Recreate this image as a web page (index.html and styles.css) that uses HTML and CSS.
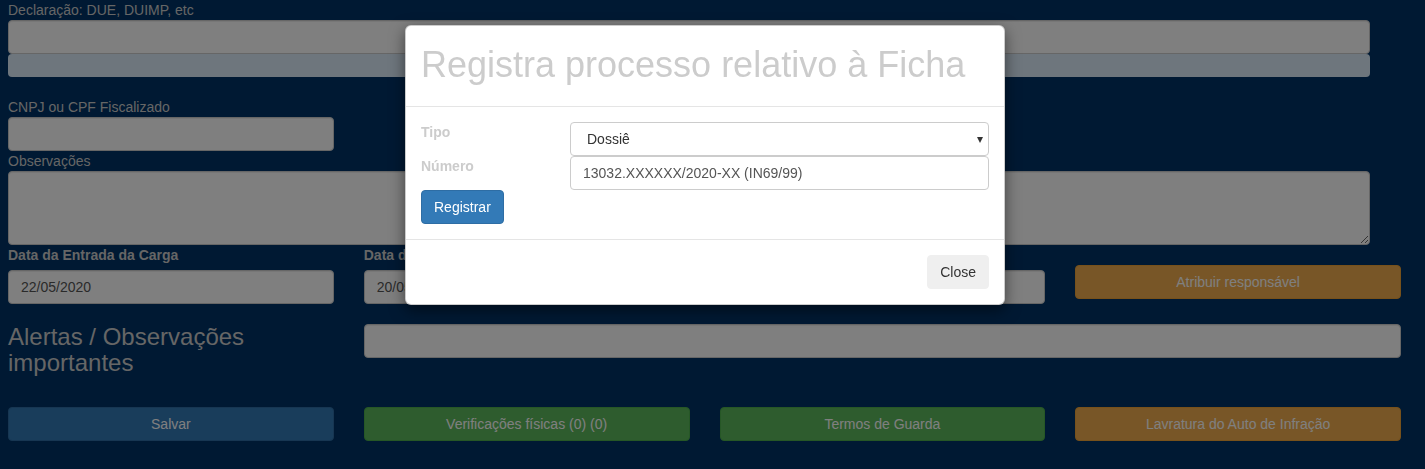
FILE: index.html
```html
<!DOCTYPE html>
<html lang="pt-BR">
<head>
<meta charset="utf-8">
<title>Ficha</title>
<link rel="stylesheet" href="styles.css">
</head>
<body>
<div class="page">
  <div class="wide">
    <label class="lbl">Declaração: DUE, DUIMP, etc</label>
    <input class="fc" type="text">
    <div class="infobar"></div>
  </div>

  <div class="grid4 cnpj-row">
    <div>
      <label class="lbl">CNPJ ou CPF Fiscalizado</label>
      <input class="fc" type="text">
    </div>
  </div>

  <div class="wide">
    <label class="lbl">Observações</label>
    <textarea class="fc ta" rows="3"></textarea>
  </div>

  <div class="grid4">
    <div>
      <label class="lbl bold">Data da Entrada da Carga</label>
      <input class="fc" type="text" value="22/05/2020">
    </div>
    <div>
      <label class="lbl bold">Data de Registro</label>
      <input class="fc" type="text" value="20/05/2020">
    </div>
    <div>
      <label class="lbl bold">Responsável</label>
      <input class="fc" type="text">
    </div>
    <div>
      <button class="btn btn-block btn-warning mt20">Atribuir responsável</button>
    </div>
  </div>

  <div class="grid4 alert-row">
    <h3 class="alert-title">Alertas / Observações importantes</h3>
    <input class="fc span3 mt20" type="text">
  </div>

  <div class="grid4 btn-row">
    <button class="btn btn-block btn-primary">Salvar</button>
    <button class="btn btn-block btn-success">Verificações físicas (0) (0)</button>
    <button class="btn btn-block btn-success">Termos de Guarda</button>
    <button class="btn btn-block btn-warning">Lavratura do Auto de Infração</button>
  </div>
</div>

<div class="backdrop"></div>

<div class="modal">
  <div class="modal-header">
    <h1 class="modal-title">Registra processo relativo à Ficha</h1>
  </div>
  <div class="modal-body">
    <div class="mform">
      <label class="mlbl">Tipo</label>
      <div class="select-wrap">
        <select class="fc msel">
          <option>Dossiê</option>
        </select>
        <span class="caret">▾</span>
      </div>
      <label class="mlbl">Número</label>
      <input class="fc minput" type="text" value="13032.XXXXXX/2020-XX (IN69/99)">
      <div class="mbtn-cell">
        <button class="btn btn-primary-solid">Registrar</button>
      </div>
    </div>
  </div>
  <div class="modal-footer">
    <button class="btn btn-close">Close</button>
  </div>
</div>
</body>
</html>
```

FILE: styles.css
```css
* { box-sizing: border-box; }

html, body {
  margin: 0;
  padding: 0;
  height: 100%;
  overflow: hidden;
}

body {
  background: #003366;
  color: #cccccc;
  font-family: "Liberation Sans", Arial, Helvetica, sans-serif;
  font-size: 14px;
  line-height: 20px;
}

.page {
  padding: 0 24px 0 8px;
}

.wide {
  width: 1362px;
}

.lbl {
  display: block;
  height: 20px;
  line-height: 20px;
  font-size: 14px;
  color: #cccccc;
  white-space: nowrap;
}

.lbl.bold {
  font-weight: bold;
  margin-bottom: 5px;
}

.fc {
  display: block;
  width: 100%;
  height: 34px;
  padding: 6px 12px;
  font-family: "Liberation Sans", Arial, Helvetica, sans-serif;
  font-size: 14px;
  line-height: 20px;
  color: #555555;
  background: #ffffff;
  border: 1px solid #cccccc;
  border-radius: 4px;
  box-shadow: inset 0 1px 1px rgba(0,0,0,.075);
  outline: none;
  margin: 0;
}

.ta {
  height: 74px;
  resize: vertical;
}

.infobar {
  height: 23px;
  background: #dcedfb;
  border-radius: 4px;
}

.grid4 {
  display: grid;
  grid-template-columns: repeat(4, 1fr);
  column-gap: 30px;
}

.cnpj-row {
  margin-top: 20px;
}

.span3 {
  grid-column: 2 / span 3;
}

.mt20 {
  margin-top: 20px;
}

.alert-title {
  margin: 20px 0 10px;
  font-size: 24px;
  line-height: 1.1;
  font-weight: normal;
  color: #cccccc;
}

.btn-row {
  margin-top: 20px;
}

.btn {
  display: inline-block;
  height: 34px;
  padding: 6px 12px;
  font-family: "Liberation Sans", Arial, Helvetica, sans-serif;
  font-size: 14px;
  line-height: 20px;
  text-align: center;
  white-space: nowrap;
  border: 1px solid transparent;
  border-radius: 4px;
  cursor: pointer;
}

.btn-block {
  display: block;
  width: 100%;
}

.btn-primary { background: #337ab7; border-color: #2e6da4; color: #ffffff; }
.btn-success { background: #5cb85c; border-color: #4cae4c; color: #ffffff; }
.btn-warning { background: #f0ad4e; border-color: #eea236; color: #ffffff; }

.backdrop {
  position: fixed;
  inset: 0;
  background: rgba(0,0,0,.5);
}

.modal {
  position: absolute;
  left: 405px;
  top: 25px;
  width: 600px;
  background: #ffffff;
  border: 1px solid rgba(0,0,0,.2);
  border-radius: 6px;
  box-shadow: 0 5px 15px rgba(0,0,0,.5);
}

.modal-header {
  padding: 15px;
  border-bottom: 1px solid #e5e5e5;
}

.modal-title {
  margin: 4px 0 6px;
  font-size: 36px;
  line-height: 1.1;
  font-weight: normal;
  color: #cccccc;
}

.modal-body {
  padding: 15px;
}

.mform {
  display: grid;
  grid-template-columns: 149px 1fr;
  grid-template-rows: 34px 34px 34px;
}

.mlbl {
  font-weight: bold;
  color: #cccccc;
  line-height: 20px;
}

.select-wrap {
  position: relative;
}

.msel {
  appearance: none;
  -webkit-appearance: none;
  color: #333333;
  padding-left: 16px;
  box-shadow: none;
}

.caret {
  position: absolute;
  right: 6px;
  top: 7px;
  font-size: 12px;
  color: #333333;
  pointer-events: none;
}

.minput {
  box-shadow: none;
}

.mbtn-cell {
  grid-column: 1 / span 2;
}

.btn-primary-solid {
  background: #337ab7;
  border-color: #2e6da4;
  color: #ffffff;
}

.modal-footer {
  padding: 15px;
  text-align: right;
  border-top: 1px solid #e5e5e5;
}

.btn-close {
  background: #efefef;
  border-color: #efefef;
  color: #333333;
}
```
